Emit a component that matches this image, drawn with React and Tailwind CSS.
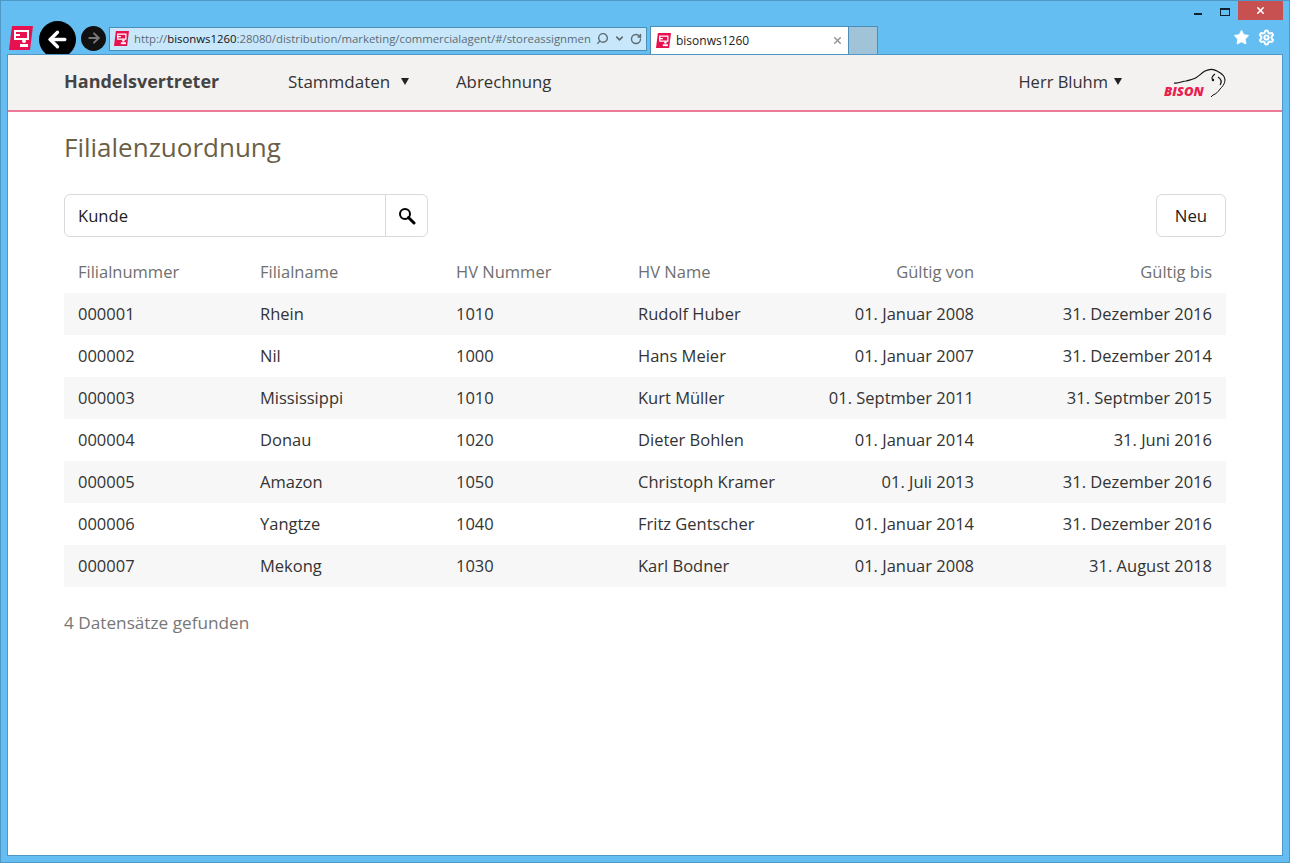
import { Star, Settings, X, ChevronDown, RotateCw, Search, ArrowLeft, ArrowRight } from 'lucide-react'

const rows = [
  ['000001', 'Rhein', '1010', 'Rudolf Huber', '01. Januar 2008', '31. Dezember 2016'],
  ['000002', 'Nil', '1000', 'Hans Meier', '01. Januar 2007', '31. Dezember 2014'],
  ['000003', 'Mississippi', '1010', 'Kurt Müller', '01. Septmber 2011', '31. Septmber 2015'],
  ['000004', 'Donau', '1020', 'Dieter Bohlen', '01. Januar 2014', '31. Juni 2016'],
  ['000005', 'Amazon', '1050', 'Christoph Kramer', '01. Juli 2013', '31. Dezember 2016'],
  ['000006', 'Yangtze', '1040', 'Fritz Gentscher', '01. Januar 2014', '31. Dezember 2016'],
  ['000007', 'Mekong', '1030', 'Karl Bodner', '01. Januar 2008', '31. August 2018'],
]

function Favicon({ className }) {
  return (
    <svg viewBox="0 0 24 24" className={className}>
      <polygon points="3,0 24,0 21,24 0,24" fill="#e8114f" />
      <rect x="6" y="5" width="13" height="8" fill="none" stroke="#fff" strokeWidth="2" />
      <rect x="5" y="8" width="6" height="2" fill="#fff" />
      <circle cx="15" cy="15" r="2" fill="#fff" />
      <rect x="11" y="18" width="8" height="3" fill="#fff" />
    </svg>
  )
}

function SearchGlyph() {
  return (
    <svg viewBox="0 0 18 18" className="w-[18px] h-[18px]">
      <circle cx="7" cy="7" r="5" fill="none" stroke="#000" strokeWidth="2" />
      <path d="M10.5 10.5 L16 16" stroke="#000" strokeWidth="3" strokeLinecap="round" />
    </svg>
  )
}

function Caret() {
  return (
    <svg viewBox="0 0 8 7" className="w-[8px] h-[7px]">
      <polygon points="0,0 8,0 4,7" fill="#222" />
    </svg>
  )
}

function BisonLogo() {
  return (
    <div className="relative w-[62px] h-[30px] mt-[4px]">
      <svg viewBox="0 0 62 30" className="absolute inset-0 w-[62px] h-[30px] overflow-visible">
        <path d="M10 14 C15 15 18 12 22 12 C25 11 27 11 29 10 C34 9 37 4 41 2 C45 0 50 0 53 2 C57 4 61 7 61 11" fill="none" stroke="#111" strokeWidth="1.2" />
        <path d="M61 11 C61 15 58 18 56 20 C54 23 52 25 49 26 L47 28" fill="none" stroke="#111" strokeWidth="1" />
        <path d="M51 5 C48 7 47 10 49 11 M54 8 C57 10 58 13 56 16" fill="none" stroke="#111" strokeWidth="1.2" />
        <circle cx="49" cy="11" r="1.2" fill="#111" />
      </svg>
      <span className="absolute left-0 top-[14px] text-[13px] leading-[16px] font-extrabold italic text-[#e8204f]">BISON</span>
    </div>
  )
}

export default function App() {
  return (
    <div className="w-[1290px] h-[863px] overflow-hidden flex flex-col bg-[#65bef1] border border-[#4f97c4] px-[6px] pb-[6px] font-['Open_Sans',sans-serif]">
      {/* window chrome */}
      <div className="relative h-[53px] shrink-0">
        <div className="absolute top-0 right-0 flex items-start">
          <div className="w-[8px] h-[2px] mt-[12px] mr-[18px] bg-[#10222e]" />
          <div className="w-[10px] h-[8px] mt-[7px] mr-[8px] border border-[#10222e] border-t-[2px]" />
          <div className="w-[45px] h-[19px] bg-[#c75050] flex items-center justify-center">
            <X className="w-[11px] h-[11px] text-white" strokeWidth={3.5} />
          </div>
        </div>

        <div className="absolute left-[2px] top-[20px] flex items-center h-[33px] overflow-hidden">
          <Favicon className="w-[24px] h-[24px]" />
          <div className="w-[37px] h-[37px] ml-[6px] self-start shrink-0 rounded-full bg-black flex items-center justify-center">
            <ArrowLeft className="w-[25px] h-[25px] text-white" strokeWidth={3.2} />
          </div>
          <div className="w-[25px] h-[25px] ml-[5px] mt-[1px] rounded-full bg-[#111] flex items-center justify-center">
            <ArrowRight className="w-[16px] h-[16px] text-[#777]" strokeWidth={3} />
          </div>
          <div className="ml-[3px] mt-[2px] w-[538px] h-[24px] bg-[#c9e7fa] border border-[#4a8fb8] flex items-center pl-[4px] pr-[4px]">
            <Favicon className="w-[15px] h-[15px] shrink-0" />
            <div className="ml-[5px] flex-1 overflow-hidden whitespace-nowrap text-[11.35px] text-[#5c6c76]">
              http://<span className="text-[#111]">bisonws1260</span>:28080/distribution/marketing/commercialagent/#/storeassignmen
            </div>
            <Search className="w-[13px] h-[13px] mr-[2px] shrink-0 text-[#5c6c76] -scale-x-100" strokeWidth={2.6} />
            <ChevronDown className="w-[11px] h-[11px] ml-[3px] shrink-0 text-[#5c6c76]" strokeWidth={3.5} />
            <RotateCw className="w-[12px] h-[12px] ml-[5px] shrink-0 text-[#5c6c76]" strokeWidth={2.8} />
          </div>
          <div className="ml-[3px] w-[199px] h-[28px] self-end bg-white border border-b-0 border-[#4a8fb8] flex items-center pl-[5px] pr-[5px]">
            <Favicon className="w-[15px] h-[15px] shrink-0" />
            <span className="ml-[5px] flex-1 text-[12px] text-[#222]">bisonws1260</span>
            <X className="w-[11px] h-[11px] text-[#999]" strokeWidth={3.5} />
          </div>
          <div className="w-[29px] h-[28px] self-end bg-[#a1c3d8] border border-l-0 border-b-0 border-[#4a8fb8]" />
        </div>

        <div className="absolute right-[8px] top-[28px] flex items-center gap-[8px]">
          <Star className="w-[17px] h-[17px] text-white fill-white" strokeWidth={1} />
          <Settings className="w-[17px] h-[17px] text-white" strokeWidth={2.8} />
        </div>
      </div>

      {/* page */}
      <div className="flex-1 bg-white border border-[#4f97c4] flex flex-col overflow-hidden">
        <header className="h-[57px] shrink-0 bg-[#f3f2f1] border-b-2 border-[#ec7a96] flex items-center px-[56px] pb-[2px] text-[#333]">
          <span className="w-[224px] text-[18px] font-bold text-[#444]">Handelsvertreter</span>
          <div className="w-[168px] flex items-center">
            <span className="w-[113px] text-[17px]">Stammdaten</span>
            <Caret />
          </div>
          <span className="text-[16.8px]">Abrechnung</span>
          <span className="ml-auto pt-[1px] text-[16.5px]">Herr Bluhm</span>
          <span className="ml-[6px] flex"><Caret /></span>
          <div className="ml-[42px]"><BisonLogo /></div>
        </header>

        <main className="flex-1 px-[56px]">
          <h1 className="mt-[15px] text-[26px] leading-[40px] text-[#6b5f45]">Filialenzuordnung</h1>

          <div className="mt-[27px] flex justify-between">
            <div className="w-[364px] h-[43px] flex rounded-[6px] border border-[#d9d9d9] overflow-hidden">
              <div className="flex-1 flex items-center pl-[13px] pt-[1px] text-[16.6px] text-[#222]">Kunde</div>
              <div className="w-[42px] border-l border-[#d9d9d9] flex items-center justify-center"><SearchGlyph /></div>
            </div>
            <button className="w-[70px] h-[43px] rounded-[6px] border border-[#d9d9d9] text-[16.8px] text-[#222]">Neu</button>
          </div>

          <table className="mt-[14px] w-[1162px] table-fixed border-collapse text-[16.5px]">
            <colgroup>
              <col className="w-[182px]" />
              <col className="w-[196px]" />
              <col className="w-[182px]" />
              <col className="w-[182px]" />
              <col className="w-[182px]" />
              <col className="w-[238px]" />
            </colgroup>
            <thead>
              <tr className="h-[42px] text-[#6f6f6f]">
                <th className="px-[14px] text-left font-normal">Filialnummer</th>
                <th className="px-[14px] text-left font-normal">Filialname</th>
                <th className="px-[14px] text-left font-normal">HV Nummer</th>
                <th className="px-[14px] text-left font-normal">HV Name</th>
                <th className="px-[14px] text-right font-normal">Gültig von</th>
                <th className="px-[14px] text-right font-normal">Gültig bis</th>
              </tr>
            </thead>
            <tbody>
              {rows.map((r, i) => (
                <tr key={r[0]} className={`h-[42px] text-[#333] ${i % 2 === 0 ? 'bg-[#f7f7f7]' : 'bg-white'}`}>
                  <td className="px-[14px]">{r[0]}</td>
                  <td className="px-[14px]">{r[1]}</td>
                  <td className="px-[14px]">{r[2]}</td>
                  <td className="px-[14px] whitespace-nowrap">{r[3]}</td>
                  <td className="px-[14px] text-right whitespace-nowrap">{r[4]}</td>
                  <td className="px-[14px] text-right whitespace-nowrap">{r[5]}</td>
                </tr>
              ))}
            </tbody>
          </table>

          <p className="mt-[23px] text-[17.2px] text-[#777]">4 Datensätze gefunden</p>
        </main>
      </div>
    </div>
  )
}
